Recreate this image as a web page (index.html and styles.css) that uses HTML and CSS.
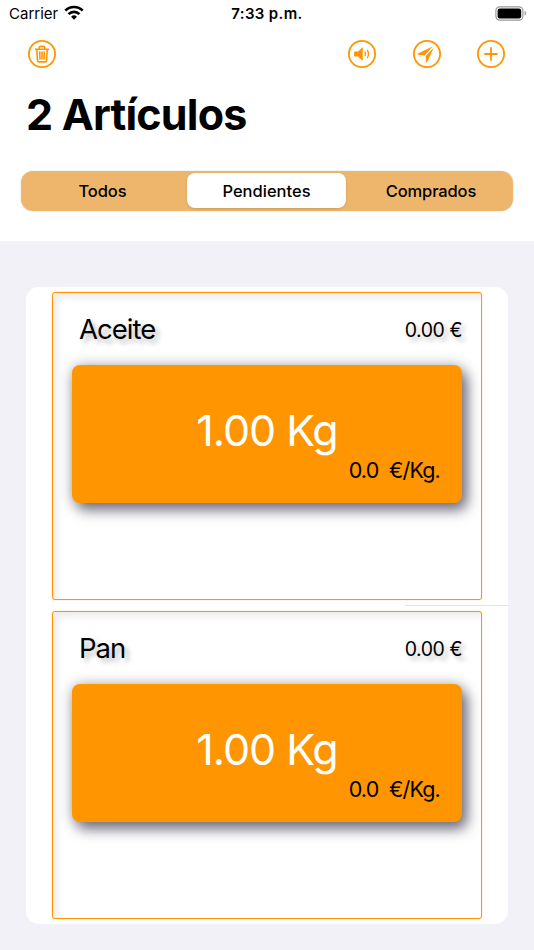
FILE: index.html
```html
<!DOCTYPE html>
<html lang="es">
<head>
<meta charset="utf-8">
<title>Artículos</title>
<link rel="stylesheet" href="styles.css">
</head>
<body>
<header class="header">
  <div class="status">
    <div class="carrier"><span>Carrier</span>
      <svg width="20" height="15" viewBox="0 0 20 15" fill="none" stroke="#000" stroke-width="2.7"><path d="M1.3 5.6a12.3 12.3 0 0 1 17.4 0M4.6 9.1a7.6 7.6 0 0 1 10.8 0"/><path d="M10 14.7L7.1 11.8a4.1 4.1 0 0 1 5.8 0z" fill="#000" stroke="none"/></svg>
    </div>
    <div class="time">7:33 p.m.</div>
    <svg class="battery" width="32" height="15" viewBox="0 0 32 15"><rect x=".9" y=".8" width="27" height="13.3" rx="3.8" fill="none" stroke="#999" stroke-width="1.2"/><rect x="2.6" y="2.5" width="23.6" height="9.9" rx="2.2"/><path d="M29.6 5.1c2 .7 2 4 0 4.7z" fill="#999"/></svg>
  </div>
  <nav class="toolbar">
    <svg class="icon" viewBox="0 0 28 28"><circle cx="14" cy="14" r="13.1"/><path class="bin" d="M7 9.2h14M11.2 9.2V7.7q0-1.3 1.3-1.3h3q1.3 0 1.3 1.3v1.5M8.8 9.6l.7 11q.1 1.3 1.3 1.3h6.4q1.2 0 1.3-1.3l.7-11M11.7 11.4l.3 8.2M14 11.4v8.2M16.3 11.4l-.3 8.2"/></svg>
    <div class="actions">
      <svg class="icon" viewBox="0 0 28 28"><circle cx="14" cy="14" r="13.1"/><path class="solid" d="M7 11.4h3.2l3.8-3.7q.8-.6.8.4v11.8q0 1-.8.4l-3.8-3.7H7q-.9 0-.9-.9v-3.4q0-.9.9-.9z"/><path class="thin" d="M16.8 11.7q1.4 2.3 0 4.6M19.2 9.8q2.6 4.2 0 8.4"/></svg>
      <svg class="icon" viewBox="0 0 28 28"><circle cx="14" cy="14" r="13.1"/><path class="solid" d="M19.6 6.6L5 13.6q-1 .7.2 1.1l6.5.8zM20.9 7.6L12.6 16.2l.6 5.9q.4 1 1 0z"/></svg>
      <svg class="icon" viewBox="0 0 28 28"><circle cx="14" cy="14" r="13.1"/><path d="M14 8v12M8 14h12" stroke-linecap="round"/></svg>
    </div>
  </nav>
  <h1 class="title">2 Artículos</h1>
  <div class="segments">
    <div class="segment">Todos</div>
    <div class="segment selected">Pendientes</div>
    <div class="segment">Comprados</div>
  </div>
</header>
<main class="list">
  <section class="cell">
    <article class="item">
      <div class="row"><span class="name">Aceite</span><span class="price">0.00 €</span></div>
      <div class="quantity"><div class="amount">1.00 Kg</div><div class="unit">0.0&nbsp; €/Kg.</div></div>
    </article>
  </section>
  <div class="separator"></div>
  <section class="cell">
    <article class="item">
      <div class="row"><span class="name">Pan</span><span class="price">0.00 €</span></div>
      <div class="quantity"><div class="amount">1.00 Kg</div><div class="unit">0.0&nbsp; €/Kg.</div></div>
    </article>
  </section>
</main>
</body>
</html>
```
FILE: styles.css
```css
* { box-sizing: border-box; }
body { margin: 0; height: 950px; overflow: hidden; background: #f2f1f7; color: #000; font-family: Inter, sans-serif; }
svg { display: block; }
.header { height: 241px; background: #fff; }
.status { display: grid; grid-template-columns: 1fr auto 1fr; align-items: center; height: 27px; padding: 0 7px 0 9px; font-size: 15px; }
.carrier { display: flex; align-items: center; gap: 6px; }
.carrier svg { margin-top: -2px; }
.time { margin-right: 2px; font-weight: 600; letter-spacing: .35px; }
.battery { justify-self: end; }
.toolbar { display: flex; justify-content: space-between; margin-top: 13px; padding: 0 29px 0 28px; }
.actions { display: flex; gap: 36.5px; }
.icon { width: 28px; height: 28px; fill: none; stroke: #ff9500; stroke-width: 1.8; }
.icon .solid { fill: #ff9500; stroke: none; }
.icon .thin { stroke-width: 1.3; }
.icon .bin { stroke-width: 1.6; }
.title { margin: 20px 26px 0; font-size: 43px; line-height: 52px; font-weight: 700; letter-spacing: -.8px; }
.segments { display: grid; grid-template-columns: 163px 1fr 164px; height: 40px; margin: 30.5px 21px 0; padding: 2.5px 1px; border-radius: 12px; background: #edb66c; box-shadow: 0 0 1.5px #9997; }
.segment { display: grid; place-items: center; font-size: 16.5px; font-weight: 500; }
.segment:first-child { padding-right: 2px; letter-spacing: -.1px; }
.segment:last-child { padding-left: 2px; letter-spacing: -.15px; }
.selected { margin: 0 2px; border-radius: 8px; background: #fff; box-shadow: 0 1px 3px #0002; }
.list { width: 482px; height: 637px; margin: 46px 26px 0; border-radius: 13px; background: #fff; overflow: hidden; }
.cell { height: 318px; padding: 5px 26px; }
.item { height: 308px; padding: 0 19px; border: 1px solid #ff9500; border-radius: 3px; box-shadow: inset 9px 9px 7px -4px #00000012, 0 0 1px #ff9500; overflow: hidden; }
.separator { height: 1px; margin-left: 379px; background: #e5e5e7; }
.row { display: flex; align-items: center; justify-content: space-between; height: 72px; padding: 0 0 0 7px; text-shadow: 4px 4px 5px #0004; }
.name { font-size: 27.5px; letter-spacing: -.95px; }
.price { padding-top: 1px; font-size: 19.5px; letter-spacing: -.45px; }
.quantity { height: 138px; padding: 39px 22px 0; border-radius: 8px; background: #ff9500; box-shadow: 5px 7px 14px #555060cc, 0 0 14px #0000003d; }
.amount { color: #fff; font-size: 43px; line-height: 52px; letter-spacing: -1.05px; text-align: center; }
.unit { font-size: 21.5px; line-height: 28px; letter-spacing: -.8px; text-align: right; }
```
